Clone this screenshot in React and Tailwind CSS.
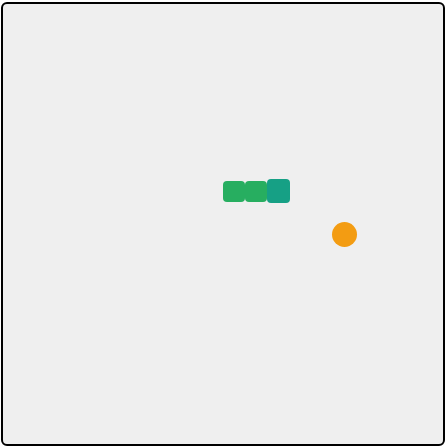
import React from "react";

// game state snapshot: snake body, head, and food on the board canvas
const App = () => {
  return (
    <div className="w-[446px] h-[447px] flex items-center justify-center bg-white">
      <div className="relative w-[444px] h-[444px] border-2 border-black rounded-md bg-[#efefef] overflow-hidden">
        <div className="absolute left-[220px] top-[177px] w-[22px] h-[21px] rounded-[4px] bg-[#27ae60]" />
        <div className="absolute left-[242px] top-[177px] w-[22px] h-[21px] rounded-[4px] bg-[#27ae60]" />
        <div className="absolute left-[264px] top-[175px] w-[23px] h-[24px] rounded-[4px] bg-[#16a085]" />
        <div className="absolute left-[329px] top-[218px] w-[25px] h-[25px] rounded-full bg-[#f39c12]" />
      </div>
    </div>
  );
};

export default App;
